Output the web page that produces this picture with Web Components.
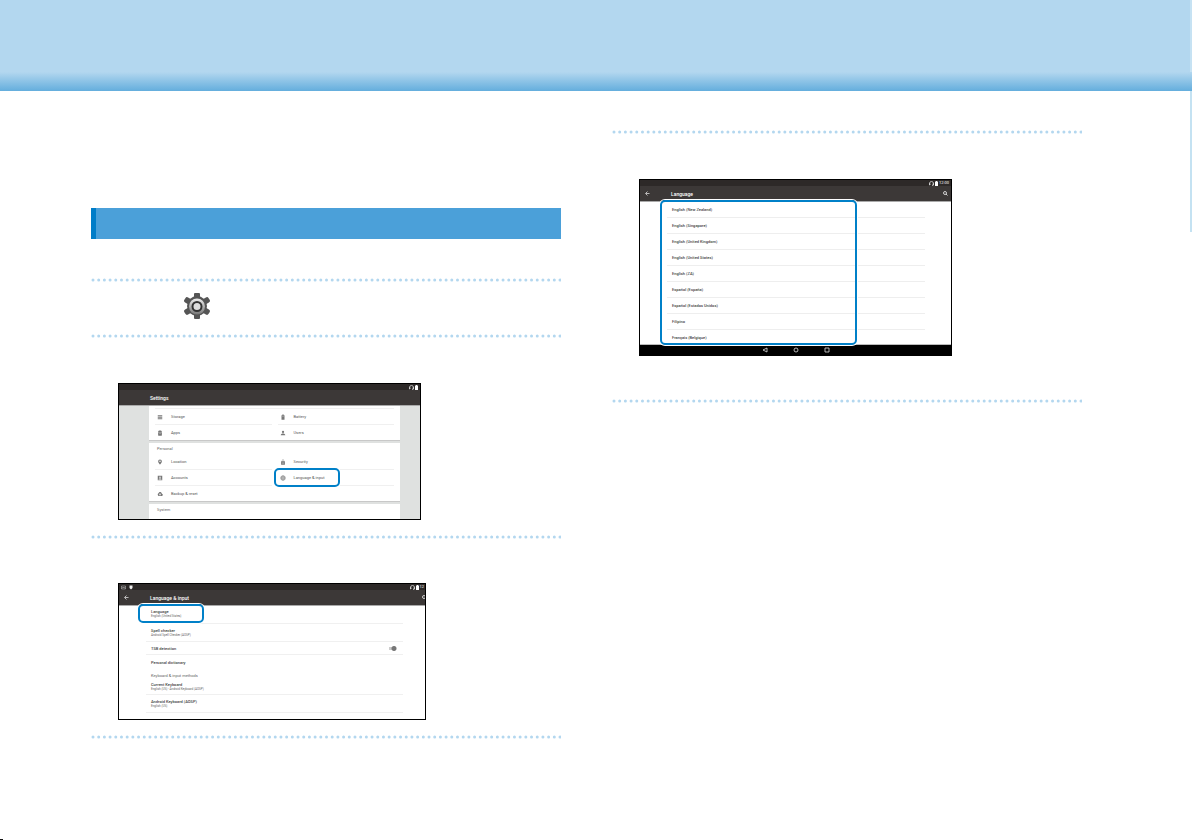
<!DOCTYPE html>
<html lang="en">
<head>
<meta charset="utf-8">
<title>Language settings</title>
<style>
  body {
    margin: 0;
    min-height: 100vh;
    display: flex;
    flex-direction: column;
    background: #fff;
    font-family: Roboto, "Liberation Sans", sans-serif;
    color: #444;
  }
  main {
    flex: 1;
    display: grid;
    grid-template-columns: 1fr 1fr;
    gap: 51px;
    padding: 0 110px 0 91px;
  }
  .left { padding-top: 117px; }
  .right { padding-top: 39px; }
  footer { width: 3px; height: 1px; background: #111; }
</style>
</head>
<body>
<page-banner></page-banner>
<main>
  <section class="left">
    <section-bar></section-bar>
    <manual-step class="short"><gear-icon></gear-icon></manual-step>
    <manual-step>
      <device-screen style="--w: 303px; --h: 137px; --bg: #dfe1e0" heading="Settings">
        <settings-card class="first">
          <setting-item icon="storage">Storage</setting-item>
          <setting-item icon="battery">Battery</setting-item>
          <setting-item icon="apps">Apps</setting-item>
          <setting-item icon="user">Users</setting-item>
        </settings-card>
        <settings-card heading="Personal">
          <setting-item icon="pin">Location</setting-item>
          <setting-item icon="lock">Security</setting-item>
          <setting-item icon="account">Accounts</setting-item>
          <setting-item icon="globe" marked>Language &amp; input</setting-item>
          <setting-item icon="cloud">Backup &amp; reset</setting-item>
        </settings-card>
        <settings-card heading="System"></settings-card>
      </device-screen>
    </manual-step>
    <manual-step class="close">
      <device-screen style="--w: 308px; --h: 137px" heading="Language &amp; input" time="12" back search notices cut>
        <pref-list>
          <pref-row class="first" note="English (United States)" marked>Language</pref-row>
          <pref-row note="Android Spell Checker (AOSP)">Spell checker</pref-row>
          <pref-row class="low" toggle>TSB detection</pref-row>
          <pref-row class="low plain">Personal dictionary</pref-row>
          <pref-row class="group plain">Keyboard &amp; input methods</pref-row>
          <pref-row class="tight" note="English (US) - Android Keyboard (AOSP)">Current Keyboard</pref-row>
          <pref-row note="English (US)">Android Keyboard (AOSP)</pref-row>
        </pref-list>
      </device-screen>
    </manual-step>
    <manual-step class="last"></manual-step>
  </section>
  <section class="right">
    <manual-step class="wide">
      <device-screen style="--w: 313px; --h: 177px" heading="Language" time="12:00" back search nav>
        <language-list>
          <a href="#">English (New Zealand)</a>
          <a href="#">English (Singapore)</a>
          <a href="#">English (United Kingdom)</a>
          <a href="#">English (United States)</a>
          <a href="#">English (ZA)</a>
          <a href="#">Español (España)</a>
          <a href="#">Español (Estados Unidos)</a>
          <a href="#">Filipino</a>
          <a href="#">Français (Belgique)</a>
        </language-list>
      </device-screen>
    </manual-step>
    <manual-step class="last"></manual-step>
  </section>
</main>
<footer></footer>

<script>
const MARK = `
  border: 2px solid #0080c8;
  border-radius: 5px;
  box-shadow: 0 0 0 1px #fff;
  box-sizing: border-box;
  pointer-events: none;
`

const ICONS = {
  storage: '<path d="M2 3h12v3H2zM2 7h12v3H2zM2 11h12v3H2z"/>',
  battery: '<path d="M6 1h4v2h2v12H4V3h2z"/><path d="M6 6h4" stroke="#fff"/>',
  apps: '<path d="M3 5c0-5 10-5 10 0zM3 6h10v8q0 1-1 1H4q-1 0-1-1z"/><path d="M6 9h4" stroke="#fff"/>',
  user: '<circle cx="8" cy="5" r="3"/><path d="M2 14c0-6 12-6 12 0z"/>',
  pin: '<path fill-rule="evenodd" d="M8 1a5 5 0 0 0-5 5c0 4 5 9 5 9s5-5 5-9a5 5 0 0 0-5-5zm0 3a2 2 0 1 1 0 4 2 2 0 0 1 0-4z"/>',
  lock: '<path fill-rule="evenodd" d="M5 6V4a3 3 0 0 1 6 0v2h2v9H3V6zm1 0h4V4a2 2 0 0 0-4 0zm2 3a1 1 0 1 0 0 3 1 1 0 0 0 0-3z"/>',
  account: '<path fill-rule="evenodd" d="M2 2h12v12H2zm6 2a2 2 0 1 0 0 4 2 2 0 0 0 0-4zm-4 8h8c0-4-8-4-8 0z"/>',
  globe: '<g fill="none" stroke="#777" stroke-width="1.5"><circle cx="8" cy="8" r="6"/><ellipse cx="8" cy="8" rx="3" ry="6"/><path d="M2 6h12M2 10h12"/></g>',
  cloud: '<path fill-rule="evenodd" d="M4 13a4 4 0 0 1 0-7c2-5 8-4 9 1 4 1 3 6 0 6zm4-7-3 3h2v3h2V9h2z"/>'
}

function define(name, html, setup) {
  const template = document.createElement('template')
  template.innerHTML = html
  customElements.define(name, class extends HTMLElement {
    constructor() {
      super()
      this.attachShadow({ mode: 'open' }).appendChild(template.content.cloneNode(true))
    }
    connectedCallback() {
      if (setup) setup(this, this.shadowRoot)
    }
  })
}

define('page-banner', `
  <style>
    :host {
      display: block;
      position: relative;
      height: 91px;
      background: linear-gradient(#b3d7ef 72px, #64aedd);
    }
    /* index tab on the page edge */
    .tab {
      position: absolute;
      right: 0;
      top: 0;
      width: 2px;
      height: 232px;
      background: linear-gradient(#c6e2f3 72px, transparent 72px, transparent 91px, #c4e2f2 91px);
    }
  </style>
  <div class="tab"></div>
`)

define('section-bar', `
  <style>
    :host {
      display: block;
      height: 31px;
      margin-bottom: 39px;
      border-left: 5px solid #007dc8;
      background: #4ba0d9;
    }
  </style>
`)

define('manual-step', `
  <style>
    :host { display: block; }
    svg { display: block; width: 100%; height: 4px; overflow: hidden; }
    .body { padding: 45px 0 15px 27px; }
    :host(.short) .body { padding: 11px 0 15px 93px; }
    :host(.close) .body { padding-top: 44px; }
    :host(.wide) .body { padding-bottom: 43px; }
    :host(.last) .body { padding: 0; }
  </style>
  <svg aria-hidden="true"><line x1="2" y1="2" x2="101%" y2="2" pathLength="83" stroke="#b3d7ef" stroke-width="3" stroke-linecap="round" stroke-dasharray="0 1"/></svg>
  <div class="body"><slot></slot></div>
`)

define('gear-icon', `
  <style>
    :host { display: block; width: 26px; height: 26px; }
    svg { display: block; }
  </style>
  <svg width="26" height="26" viewBox="0 0 26 26">
    <defs><linearGradient id="g" x1="0" y1="0" x2="0" y2="1"><stop offset="0" stop-color="#eee"/><stop offset="1" stop-color="#777"/></linearGradient></defs>
    <g fill="#555">
      <circle cx="13" cy="13" r="10"/>
      <rect x="10" y="0" width="6" height="26" rx="1"/>
      <rect x="10" y="-1" width="6" height="28" rx="2" transform="rotate(60 13 13)"/>
      <rect x="10" y="-1" width="6" height="28" rx="2" transform="rotate(120 13 13)"/>
    </g>
    <circle cx="13" cy="13.500" r="8" fill="url(#g)"/>
    <circle cx="13" cy="13.500" r="4.500" fill="#ddd" stroke="#333" stroke-width="2"/>
  </svg>
`)

define('device-screen', `
  <style>
    :host {
      display: flex;
      flex-direction: column;
      box-sizing: border-box;
      width: var(--w);
      height: var(--h);
      border: 1px solid #000;
      background: var(--bg, #fff);
      overflow: hidden;
    }
    .status {
      flex: none;
      display: flex;
      align-items: center;
      gap: 1px;
      height: 6px;
      padding: 0 2px;
      background: #2d2928;
      color: #fff;
      font-size: 4px;
      line-height: 6px;
    }
    .status svg { display: block; }
    .notices { flex: 1; display: flex; gap: 3px; }
    .notices svg { visibility: hidden; }
    :host([notices]) .notices svg { visibility: visible; }
    :host([cut]) .status { padding-right: 1px; }
    header {
      flex: none;
      display: flex;
      align-items: center;
      height: 15px;
      background: #3c3837;
      color: #fff;
      box-shadow: 0 1px 0 #aaa;
      position: relative;
    }
    h2 { flex: 1; margin: 0; font-size: 5px; font-weight: 500; line-height: 6px; }
    button {
      padding: 0;
      border: 0;
      background: none;
      color: inherit;
      font: inherit;
      line-height: 0;
    }
    .back { width: 5px; margin: 0 21px 0 5px; visibility: hidden; }
    :host([back]) .back { visibility: visible; }
    .search { display: none; margin-right: 3px; }
    :host([search]) .search { display: block; }
    :host([cut]) .search { margin-right: -2px; }
    main { flex: 1; min-height: 0; }
    nav {
      display: none;
      flex: none;
      align-items: center;
      justify-content: center;
      gap: 25px;
      height: 10px;
      background: #000;
      color: #ddd;
    }
    :host([nav]) nav { display: flex; }
    :host([nav]) main { border-bottom: 1px solid #bbb; }
  </style>
  <div class="status">
    <span class="notices">
      <svg width="5" height="5" viewBox="0 0 10 10"><path d="M1 2h8v6H1zM2 7l2-3 2 2 1-1 1 2" fill="none" stroke="#ccc"/></svg>
      <svg width="4" height="5" viewBox="0 0 8 10"><path d="M1 1h6v5L4 9 1 6z" fill="#eee"/></svg>
    </span>
    <svg width="5" height="5" viewBox="0 0 10 10"><path d="M1 7V5a4 4 0 0 1 8 0v2q0 2-3 2M1 5v3h1V5zM9 5v3H8V5z" fill="none" stroke="#ddd" stroke-width="1.500"/></svg>
    <svg width="3" height="5" viewBox="0 0 6 10"><path d="M2 0h2v1h2v9H0V1h2z" fill="#fff"/></svg>
    <span class="time"></span>
  </div>
  <header>
    <button class="back" aria-label="Back"><svg width="5" height="5" viewBox="0 0 10 10"><path d="M9 5H2M5 1 1 5l4 4" fill="none" stroke="#fff" stroke-width="1.300"/></svg></button>
    <h2></h2>
    <button class="search" aria-label="Search"><svg width="5" height="5" viewBox="0 0 10 10"><circle cx="4" cy="4" r="3" fill="none" stroke="#fff" stroke-width="1.500"/><path d="m6 6 3 3" stroke="#fff" stroke-width="1.500"/></svg></button>
  </header>
  <main><slot></slot></main>
  <nav>
    <button aria-label="Back"><svg width="6" height="6" viewBox="0 0 6 6"><path d="M5 1v4L1 3z" fill="none" stroke="currentColor" stroke-width=".8"/></svg></button>
    <button aria-label="Home"><svg width="6" height="6" viewBox="0 0 6 6"><circle cx="3" cy="3" r="2" fill="none" stroke="currentColor" stroke-width=".8"/></svg></button>
    <button aria-label="Recent apps"><svg width="6" height="6" viewBox="0 0 6 6"><path d="M1 1h4v4H1z" fill="none" stroke="currentColor" stroke-width=".8"/></svg></button>
  </nav>
`, (el, root) => {
  root.querySelector('h2').textContent = el.getAttribute('heading')
  const time = root.querySelector('.time')
  time.textContent = el.getAttribute('time') || ''
  if (!time.textContent) time.remove()
})

define('settings-card', `
  <style>
    :host {
      display: block;
      box-sizing: border-box;
      margin: 0 20px 3px 30px;
      padding: 2px 6px 0 6px;
      background: #fff;
      box-shadow: 0 1px 0 #c8c8c8;
    }
    :host(.first) { padding-top: 3px; }
    h3 { margin: 0 0 0 2px; font-size: 4px; font-weight: 400; line-height: 6px; color: #666; padding: 1px 0 2px; }
    :host(.first) h3 { display: none; }
    .grid { display: grid; grid-template-columns: 1fr 1fr; column-gap: 6px; }
    :host(.first) .grid { border-top: 1px solid #f0f0f0; }
    :host(:last-of-type) { padding-bottom: 20px; }
  </style>
  <h3></h3>
  <div class="grid"><slot></slot></div>
`, (el, root) => {
  root.querySelector('h3').textContent = el.getAttribute('heading') || ''
})

define('setting-item', `
  <style>
    :host { display: block; position: relative; border-bottom: 1px solid #f0f0f0; }
    :host([icon="cloud"]), :host([icon="apps"]), :host([icon="user"]) { border: 0; }
    a {
      display: flex;
      align-items: center;
      gap: 8px;
      height: 15px;
      padding-left: 2px;
      color: #555;
      font-size: 4px;
      line-height: 6px;
      text-decoration: none;
      white-space: nowrap;
    }
    svg { display: block; width: 6px; height: 6px; fill: #777; }
    .mark { display: none; }
    :host([marked]) .mark {
      display: block;
      position: absolute;
      left: -4px;
      top: -2px;
      width: 66px;
      height: 19px;
      ${MARK}
    }
  </style>
  <a href="#"><svg viewBox="0 0 16 16"></svg><slot></slot></a>
  <div class="mark"></div>
`, (el, root) => {
  root.querySelector('svg').innerHTML = ICONS[el.getAttribute('icon')]
})

define('pref-list', `
  <style>
    :host { display: block; margin: 0 22px 0 27px; }
  </style>
  <slot></slot>
`)

define('pref-row', `
  <style>
    :host {
      display: flex;
      flex-direction: column;
      justify-content: center;
      box-sizing: border-box;
      position: relative;
      height: 18px;
      padding-left: 5px;
      border-bottom: 1px solid #f0f0f0;
      font-size: 4px;
      font-weight: 500;
      line-height: 5px;
      white-space: nowrap;
    }
    :host(.first) { height: 19px; }
    :host(.low) { height: 13px; }
    :host(.tight) { height: 15px; }
    :host(.group) { height: 12px; font-weight: 400; color: #666; }
    :host(.plain) { border: 0; padding-top: 2px; }
    .line { display: flex; justify-content: space-between; align-items: center; }
    small { font-size: 3px; font-weight: 400; color: #666; line-height: 5px; }
    small:empty { display: none; }
    input {
      display: none;
      appearance: none;
      width: 8px;
      height: 5px;
      margin: 0 6px 0 0;
      background: radial-gradient(circle at 5px 50%, #777 2px, transparent 3px), linear-gradient(#ccc, #ccc) 0 50% / 6px 3px no-repeat;
    }
    :host([toggle]) input { display: block; }
    .mark { display: none; }
    :host([marked]) .mark {
      display: block;
      position: absolute;
      left: -8px;
      top: -1px;
      width: 66px;
      height: 19px;
      ${MARK}
    }
  </style>
  <label class="line"><span><slot></slot></span><input type="checkbox" checked></label>
  <small></small>
  <div class="mark"></div>
`, (el, root) => {
  root.querySelector('small').textContent = el.getAttribute('note') || ''
  if (!el.hasAttribute('toggle')) root.querySelector('input').remove()
})

define('language-list', `
  <style>
    :host { display: block; position: relative; padding: 1px 26px 0 27px; }
    ::slotted(a) {
      display: block;
      box-sizing: border-box;
      height: 16px;
      padding-left: 5px;
      border-bottom: 1px solid #eee;
      color: #444;
      font-size: 4px;
      font-weight: 500;
      line-height: 16px;
      text-decoration: none;
    }
    ::slotted(a:last-of-type) { border-bottom: 0; height: 14px; }
    .mark {
      position: absolute;
      left: 20px;
      top: -1px;
      width: 197px;
      height: 145px;
      ${MARK}
    }
  </style>
  <slot></slot>
  <div class="mark"></div>
`)
</script>
</body>
</html>
